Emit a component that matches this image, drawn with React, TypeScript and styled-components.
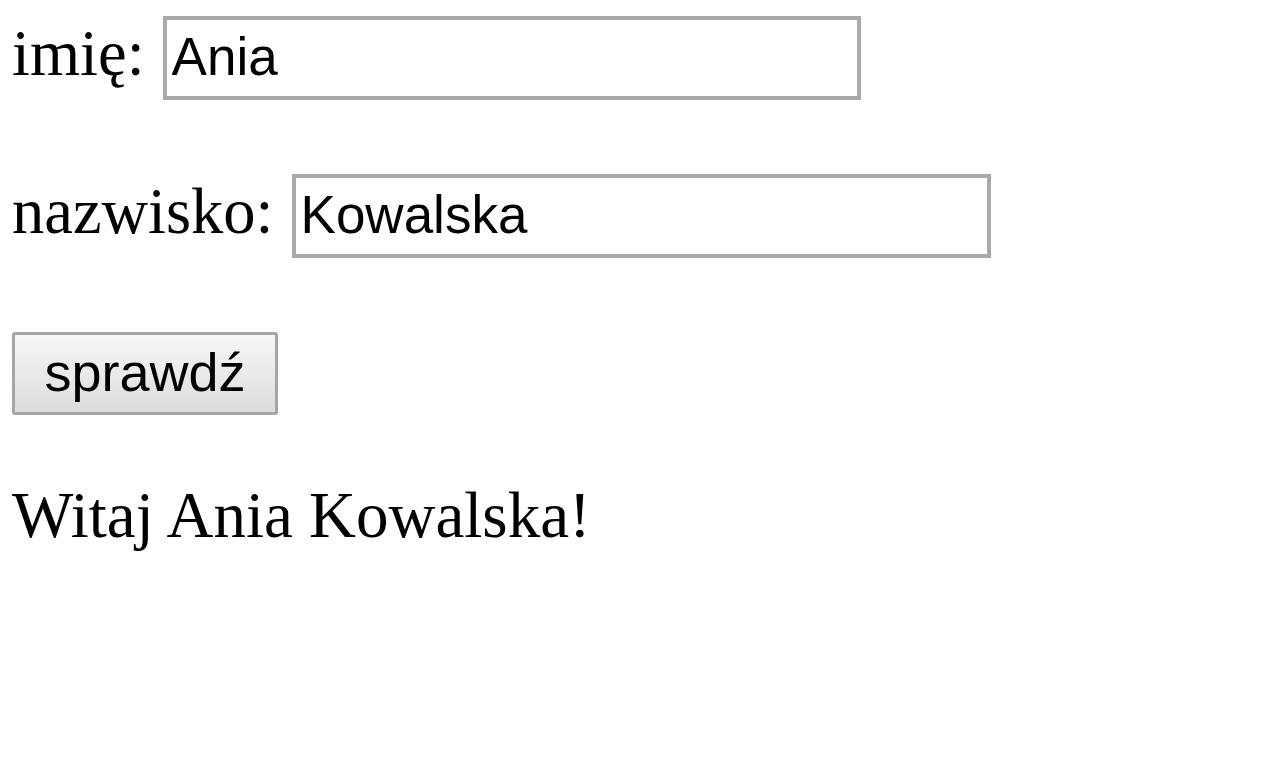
import styled, { createGlobalStyle } from "styled-components";

const GlobalStyle = createGlobalStyle`
  body {
    margin: 0;
    background: #ffffff;
    color: #000000;
    font-family: "Liberation Serif", "Times New Roman", serif;
  }
`;

const Page = styled.div`
  display: flex;
  flex-direction: column;
  align-items: flex-start;
  padding: 16px 0 0 12px;
`;

const Row = styled.div`
  display: flex;
  align-items: baseline;
  gap: 18px;
  margin-bottom: 74px;
`;

const Label = styled.span`
  font-size: 64.5px;
  line-height: normal;
`;

const Field = styled.input<{ $width: number }>`
  box-sizing: border-box;
  width: ${(p) => p.$width}px;
  height: 84px;
  padding: 0 5px 3px;
  border: 4px solid #a9a9a9;
  border-radius: 0;
  font-family: "Liberation Sans", Arial, sans-serif;
  font-size: 53px;
  color: #000000;
  background: #ffffff;
  outline: none;
`;

const Button = styled.button`
  box-sizing: border-box;
  width: 266px;
  height: 83px;
  border: 3px solid #a6a6a6;
  border-radius: 3px;
  background: linear-gradient(#f7f7f7, #dcdcdc);
  font-family: "Liberation Sans", Arial, sans-serif;
  font-size: 54px;
  color: #000000;
  padding: 0 0 4px;
`;

const Greeting = styled.div`
  margin-top: 63px;
  font-size: 65px;
  line-height: normal;
`;

export default function App() {
  return (
    <>
      <GlobalStyle />
      <Page>
        <Row>
          <Label>imię:</Label>
          <Field $width={698} defaultValue="Ania" />
        </Row>
        <Row>
          <Label>nazwisko:</Label>
          <Field $width={699} defaultValue="Kowalska" />
        </Row>
        <Button>sprawdź</Button>
        <Greeting>Witaj Ania Kowalska!</Greeting>
      </Page>
    </>
  );
}
